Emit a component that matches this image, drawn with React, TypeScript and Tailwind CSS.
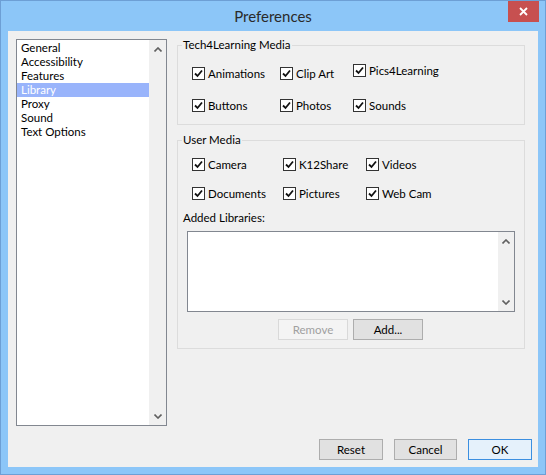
import React from 'react'

const FONT = { fontFamily: 'Lato, "Noto Sans", sans-serif' }

function Check({ label, className = '' }: { label: string; className?: string }) {
  return (
    <div className={`flex items-center h-[13px] ${className}`}>
      <span className="flex h-[13px] w-[13px] shrink-0 items-center justify-center border border-[#333333] bg-white">
        <svg width="9" height="9" viewBox="0 0 9 9">
          <path d="M1 4.5 L3.5 7 L8 1.5" fill="none" stroke="#111" strokeWidth="1.8" />
        </svg>
      </span>
      <span className="ml-[3px] text-[11.5px] leading-none text-black">{label}</span>
    </div>
  )
}

function Chevron({ down = false }: { down?: boolean }) {
  return (
    <svg width="8" height="5" viewBox="0 0 8 5">
      <path d={down ? 'M0.5 0.5 L4 4 L7.5 0.5' : 'M0.5 4.5 L4 1 L7.5 4.5'} fill="none" stroke="#606060" strokeWidth="1.6" />
    </svg>
  )
}

function Button({ children, disabled, primary, className = '' }: { children: React.ReactNode; disabled?: boolean; primary?: boolean; className?: string }) {
  const tone = disabled
    ? 'border-[#d9d9d9] bg-[#f4f4f4] text-[#a0a0a0]'
    : primary
      ? 'border-[#3c8fe0] bg-[#e5f1fb] text-black'
      : 'border-[#adadad] bg-[#e1e1e1] text-black'
  return (
    <button className={`flex h-[21px] items-center justify-center border text-[11.5px] leading-none ${tone} ${className}`}>
      {children}
    </button>
  )
}

const sections = ['General', 'Accessibility', 'Features', 'Library', 'Proxy', 'Sound', 'Text Options']

export default function App() {
  return (
    <div style={FONT} className="flex h-[475px] w-[546px] flex-col border border-[#6d9fd5] bg-[#8cc6f8]">
      {/* Title bar */}
      <div className="relative flex h-[30px] shrink-0 items-center justify-center">
        <span className="text-[15px] text-[#2a2a2a]">Preferences</span>
        <div className="absolute right-[6px] top-0 flex h-[21px] w-[31px] items-center justify-center bg-[#c75050]">
          <svg width="9" height="9" viewBox="0 0 9 9">
            <path d="M1 1 L8 8 M8 1 L1 8" stroke="white" strokeWidth="1.8" />
          </svg>
        </div>
      </div>

      {/* Client area */}
      <div className="mx-[7px] flex h-[436px] flex-col bg-[#f0f0f0]">
        <div className="flex pl-[8px] pt-[8px]">
          {/* Sections list */}
          <div className="flex h-[387px] w-[151px] border border-[#828790] bg-white">
            <div className="flex-1 pt-[1px]">
              {sections.map((s) => (
                <div
                  key={s}
                  className={`h-[14px] pl-[4px] text-[11.5px] leading-[14px] ${s === 'Library' ? 'bg-[#99b4fb] text-white' : 'text-black'}`}
                >
                  {s}
                </div>
              ))}
            </div>
            <div className="flex w-[17px] flex-col items-center justify-between bg-[#f0f0f0] pb-[6px] pt-[7px]">
              <Chevron />
              <Chevron down />
            </div>
          </div>

          {/* Right column */}
          <div className="ml-[10px] w-[348px]">
            {/* Tech4Learning Media */}
            <div className="relative mt-[6px] h-[80px] border border-[#dcdcdc]">
              <span className="absolute -top-[9px] left-[4px] bg-[#f0f0f0] px-[1px] text-[11.5px] leading-[16px] text-black">
                Tech4Learning Media
              </span>
              <div className="grid grid-cols-[88px_73px_auto] gap-y-[19px] pl-[14px] pt-[21px]">
                <Check label="Animations" />
                <Check label="Clip Art" />
                <Check label="Pics4Learning" className="-mt-[3px]" />
                <Check label="Buttons" />
                <Check label="Photos" />
                <Check label="Sounds" />
              </div>
            </div>

            {/* User Media */}
            <div className="relative mt-[15px] h-[209px] border border-[#dcdcdc]">
              <span className="absolute -top-[9px] left-[4px] bg-[#f0f0f0] px-[1px] text-[11.5px] leading-[16px] text-black">
                User Media
              </span>
              <div className="grid grid-cols-[91px_83px_auto] gap-y-[16px] pl-[14px] pt-[17px]">
                <Check label="Camera" />
                <Check label="K12Share" />
                <Check label="Videos" />
                <Check label="Documents" />
                <Check label="Pictures" />
                <Check label="Web Cam" />
              </div>
              <div className="pl-[5px] pt-[10px] text-[11.5px] leading-[16px] text-black">Added Libraries:</div>
              <div className="ml-[9px] mt-[5px] flex h-[81px] w-[328px] border border-[#828790] bg-white">
                <div className="flex-1" />
                <div className="flex w-[16px] flex-col items-center justify-between bg-[#f0f0f0] pb-[6px] pt-[7px]">
                  <Chevron />
                  <Chevron down />
                </div>
              </div>
              <div className="mt-[7px] flex justify-center gap-[5px] pl-[9px] pr-[10px]">
                <Button disabled className="w-[70px]">Remove</Button>
                <Button className="w-[70px]">Add...</Button>
              </div>
            </div>
          </div>
        </div>

        {/* Dialog buttons */}
        <div className="mt-[13px] flex justify-end gap-[11px] pr-[6px]">
          <Button className="w-[64px]">Reset</Button>
          <Button className="w-[63px]">Cancel</Button>
          <Button primary className="w-[64px]">OK</Button>
        </div>
      </div>
    </div>
  )
}
